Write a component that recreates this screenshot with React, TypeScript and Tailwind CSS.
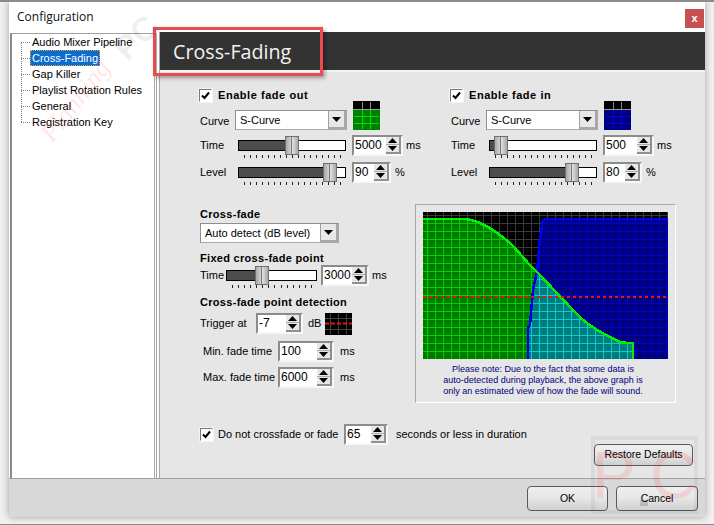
import React from 'react';

const font = "font-['Liberation_Sans',Arial,sans-serif]";

const ArrowDown = ({ w = 9, h = 5 }: { w?: number; h?: number }) => (
  <svg width={w} height={h} viewBox="0 0 9 5"><path d="M0 0h9L4.5 5z" fill="#000" /></svg>
);

const ArrowUp = () => (
  <svg width="9" height="5" viewBox="0 0 9 5"><path d="M0 5h9L4.5 0z" fill="#000" /></svg>
);

function Check({ className = '' }: { className?: string }) {
  return (
    <span className={`flex h-[13px] w-[13px] shrink-0 items-center justify-center border border-[#7a7a7a] border-b-white border-r-white bg-white shadow-[0_0_0_1px_#f4f4f4] ${className}`}>
      <svg width="9" height="9" viewBox="0 0 9 9"><path d="M1 4.5l2.5 2.5L8 1.5" fill="none" stroke="#000" strokeWidth="2" /></svg>
    </span>
  );
}

function Combo({ value, width }: { value: string; width: string }) {
  return (
    <div className={`flex h-[20px] items-stretch border border-[#8f8f8f] border-b-[#a8a8a8] border-r-[#a8a8a8] bg-white pl-[4px] ${width}`}>
      <span className="flex-1 self-center text-[11px] leading-none text-black">{value}</span>
      <span className="flex w-[18px] items-center justify-center border-l border-[#a0a0a0] border-b-2 border-r-2 border-b-[#a8a8a8] border-r-[#a8a8a8] bg-[#e8e8e8]">
        <ArrowDown />
      </span>
    </div>
  );
}

function Slider({ width, pos }: { width: number; pos: number }) {
  const fill = pos + 7;
  const ticks = Math.floor((width - 12) / 5.4);
  return (
    <div className="relative h-[21px] shrink-0" style={{ width }}>
      <div className="absolute left-0 right-0 top-[5px] flex h-[11px] border border-black bg-white">
        <div className="h-full bg-[#4d4d4d]" style={{ width: fill }} />
      </div>
      <div className="absolute top-[1px] flex h-[19px] w-[14px] border border-[#707070] bg-[#c6c6c6]" style={{ left: pos }}>
        <span className="w-[5px] bg-gradient-to-r from-[#a8a8a8] to-[#d4d4d4]" />
        <span className="w-px bg-[#777]" />
        <span className="flex-1 bg-gradient-to-r from-[#e4e4e4] to-[#a8a8a8]" />
      </div>
      <div className="absolute left-[6px] right-[5px] top-[20px] flex justify-between">
        {Array.from({ length: ticks }).map((_, i) => (
          <span key={i} className="h-[3px] w-px bg-[#222]" />
        ))}
      </div>
    </div>
  );
}

function Spinner({ value, width }: { value: string; width: string }) {
  return (
    <div className={`flex h-[21px] shrink-0 border-2 border-[#8c8c8c] border-b-[#f7f7f7] border-r-[#f7f7f7] bg-white ${width}`}>
      <span className="flex-1 pl-[1px] pt-[1px] text-[12px] leading-[14px] text-black">{value}</span>
      <span className="flex w-[15px] flex-col items-center justify-center gap-[1px] border-b-2 border-r-2 border-[#909090] bg-[#e6e6e6]">
        <ArrowUp />
        <span className="h-px w-full bg-[#aaa]" />
        <ArrowDown />
      </span>
    </div>
  );
}

function Swatch({ kind }: { kind: 'green' | 'blue' }) {
  const fill = kind === 'green' ? '#008000' : '#000080';
  const line = kind === 'green' ? '#00e000' : '#0000e0';
  return (
    <svg width="27" height="29" viewBox="0 0 27 29" className="block shrink-0">
      <rect width="27" height="29" fill="#000" />
      <rect y="9" width="27" height="20" fill={fill} />
      <path d="M9.5 1V9M17.5 1V9" stroke="#888" />
      <path d="M0 8.5H27" stroke="#999" />
      <path d="M9.5 9V28M17.5 9V28M1 15.5H26M1 22.5H26" stroke={line} />
    </svg>
  );
}

function FadeGroup(props: { title: string; kind: 'green' | 'blue'; time: string; timePos: number; level: string; levelPos: number; width: string }) {
  return (
    <div className={`shrink-0 ${props.width}`}>
      <div className="flex h-[12px] items-center">
        <Check className="-ml-[1px]" />
        <span className="ml-[6px] text-[11px] font-bold tracking-[0.55px]">{props.title}</span>
      </div>
      <div className="flex h-[29px] items-end">
        <span className="mb-[3px] w-[35px] text-[11px] leading-none">Curve</span>
        <Combo value="S-Curve" width="w-[112px]" />
        <span className="ml-[6px]"><Swatch kind={props.kind} /></span>
      </div>
      <div className="mt-[5px] flex h-[21px] items-center">
        <span className="w-[38px] text-[11px]">Time</span>
        <Slider width={108} pos={props.timePos} />
        <span className="ml-[6px] flex items-center">
          <Spinner value={props.time} width="w-[51px]" />
          <span className="ml-[3px] text-[11px]">ms</span>
        </span>
      </div>
      <div className="mt-[6px] flex h-[21px] items-center">
        <span className="w-[38px] text-[11px]">Level</span>
        <Slider width={108} pos={props.levelPos} />
        <span className="ml-[6px] flex items-center">
          <Spinner value={props.level} width="w-[39px]" />
          <span className="ml-[4px] text-[11px]">%</span>
        </span>
      </div>
    </div>
  );
}

const GREEN_AREA = 'M0 7H42C55 8 68 15 87 31C98 42 104 51 114 60C122 68 137 85 157 105C167 115 180 122 197 130C202 131 206 131 210 131V147H0Z';
const BLUE_AREA = 'M105 147V116L107 113L110 78L114 60L117 25L120 8L124 7H245V147Z';

function GridPattern({ id, fill, line }: { id: string; fill: string; line: string }) {
  return (
    <pattern id={id} width="8" height="8" patternUnits="userSpaceOnUse" x="-3" y="-4">
      <rect width="8" height="8" fill={fill} />
      <path d="M7.5 0V8M0 7.5H8" stroke={line} />
    </pattern>
  );
}

function Graph() {
  return (
    <svg width="245" height="147" viewBox="0 0 245 147" className="block" shapeRendering="crispEdges">
      <defs>
        <GridPattern id="g-black" fill="#000000" line="#3a3a3a" />
        <GridPattern id="g-green" fill="#007b00" line="#00d000" />
        <GridPattern id="g-blue" fill="#00007b" line="#0000d0" />
        <GridPattern id="g-teal" fill="#007b7b" line="#00d0d0" />
        <clipPath id="clip-green"><path d={GREEN_AREA} /></clipPath>
      </defs>
      <rect width="245" height="147" fill="url(#g-black)" />
      <path d={GREEN_AREA} fill="url(#g-green)" />
      <path d={BLUE_AREA} fill="url(#g-blue)" />
      <path d={BLUE_AREA} fill="url(#g-teal)" clipPath="url(#clip-green)" />
      <path d="M105 147V116L107 113L110 78L114 60L117 25L120 8L124 7H245" fill="none" stroke="#0000f0" strokeWidth="2.5" />
      <path d="M0 7H42C55 8 68 15 87 31C98 42 104 51 114 60C122 68 137 85 157 105C167 115 180 122 197 130C202 131 206 131 210 131V147" fill="none" stroke="#00f000" strokeWidth="2.5" />
      <path d="M0 84.5H245" stroke="#f01010" strokeWidth="2" strokeDasharray="3 3" />
    </svg>
  );
}

function DbSwatch() {
  return (
    <svg width="27" height="22" viewBox="0 0 27 22" className="block shrink-0">
      <rect width="27" height="22" fill="#000" />
      <path d="M5.5 1V21M13.5 1V21M21.5 1V21M0 5.5H27M0 16.5H27" stroke="#444" />
      <path d="M0 10.5H27" stroke="#f01010" strokeWidth="2" strokeDasharray="4 2" />
    </svg>
  );
}

const TREE = ['Audio Mixer Pipeline', 'Cross-Fading', 'Gap Killer', 'Playlist Rotation Rules', 'General', 'Registration Key'];

function Tree() {
  return (
    <div className="ml-px h-[445px] w-[143px] shrink-0 border-l-2 border-t border-[#8a8a8a] border-t-[#a0a0a0] bg-white">
      <div className="relative">
        <div className="absolute left-[9px] top-[8px] h-[80px] border-l border-dotted border-[#808080]" />
        {TREE.map((name) => {
          const selected = name === 'Cross-Fading';
          return (
            <div key={name} className="flex h-[16px] items-center pl-[9px]">
              <span className="w-[9px] shrink-0 border-t border-dotted border-[#808080]" />
              <span
                className={
                  selected
                    ? 'border border-dotted border-[#f0a040] bg-[#0a6ccf] pl-[1px] pr-[1px] text-[11px] leading-[14px] text-white'
                    : 'pl-[2px] text-[11px] leading-[14px] text-black'
                }
              >
                {name}
              </span>
            </div>
          );
        })}
      </div>
    </div>
  );
}

function PushButton({ label, width }: { label: string; width: string }) {
  return (
    <button className={`flex items-center justify-center rounded-[4px] border border-[#5a5a5a] bg-gradient-to-b from-[#efefef] via-[#e6e6e6] to-[#cfcfcf] text-[10.5px] text-black ${width}`}>
      {label}
    </button>
  );
}

export default function App() {
  return (
    <div className={`relative h-[525px] w-[714px] overflow-hidden border-b border-t-2 border-[#8c8c8c] bg-[#f0f0f0] pl-[9px] text-black ${font}`}>
      <div className="flex h-[515px] w-[696px] flex-col bg-white shadow-[0_0_7px_rgba(0,0,0,0.35)]">
        {/* Title bar */}
        <div className="flex h-[30px] items-start justify-between">
          <span className="ml-[8px] mt-[7px] font-['Open_Sans',sans-serif] text-[12px] leading-[16px] text-[#111]">Configuration</span>
          <span className="mr-[1px] mt-[7px] flex h-[19px] w-[19px] items-center justify-center bg-[#c75050] text-[11px] font-bold leading-none text-white">x</span>
        </div>

        {/* Body */}
        <div className="flex flex-1">
          <div className="mt-[1px] flex items-start">
            <Tree />
          </div>
          <div className="ml-[1px] mt-[1px] h-[445px] w-[3px] shrink-0 border-x border-[#a8a8a8]" />
          <div className="w-[2px] shrink-0" />
          <div className="flex h-[446px] min-w-0 flex-1 flex-col border-l border-[#a8a8a8] bg-[#e6e6e6]">
            <div className="flex h-[40px] shrink-0 items-center border-b-2 border-[#f4f4f4] bg-[#333333] pl-[13px] pt-[2px]">
              <span className="font-['Open_Sans',sans-serif] text-[19.7px] leading-none text-[#f2f2f2]">Cross-Fading</span>
            </div>
            <div className="pl-[40px] pr-[12px] pt-[17px]">
              <div className="flex">
                <FadeGroup title="Enable fade out" kind="green" time="5000" timePos={47} level="90" levelPos={85} width="w-[251px]" />
                <FadeGroup title="Enable fade in" kind="blue" time="500" timePos={5} level="80" levelPos={76} width="w-[242px]" />
              </div>

              <div className="mt-[21px] flex">
                <div className="w-[215px] shrink-0 pt-[4px]">
                  <div className="text-[11px] font-bold leading-[13px] tracking-[0.3px]">Cross-fade</div>
                  <div className="mt-[2px]"><Combo value="Auto detect (dB level)" width="w-[139px]" /></div>
                  <div className="mt-[8px] text-[11px] font-bold leading-[14px] tracking-[0.3px]">Fixed cross-fade point</div>
                  <div className="flex h-[21px] items-center">
                    <span className="w-[26px] text-[11px]">Time</span>
                    <Slider width={91} pos={29} />
                    <span className="ml-[4px]"><Spinner value="3000" width="w-[48px]" /></span>
                    <span className="ml-[3px] text-[11px]">ms</span>
                  </div>
                  <div className="mt-[9px] text-[11px] font-bold leading-[14px] tracking-[0.3px]">Cross-fade point detection</div>
                  <div className="mt-[4px] flex h-[21px] items-center">
                    <span className="w-[56px] text-[11px]">Trigger at</span>
                    <Spinner value="-7" width="w-[47px]" />
                    <span className="ml-[5px] w-[17px] text-[11px]">dB</span>
                    <DbSwatch />
                  </div>
                  <div className="ml-[3px] mt-[7px] flex h-[21px] items-center">
                    <span className="w-[75px] text-[11px]">Min. fade time</span>
                    <Spinner value="100" width="w-[56px]" />
                    <span className="ml-[6px] text-[11px]">ms</span>
                  </div>
                  <div className="ml-[3px] mt-[5px] flex h-[21px] items-center">
                    <span className="w-[75px] text-[11px]">Max. fade time</span>
                    <Spinner value="6000" width="w-[56px]" />
                    <span className="ml-[6px] text-[11px]">ms</span>
                  </div>
                </div>
                <div className="h-[199px] w-[261px] shrink-0 border border-[#a8a8a8] border-b-white border-r-white pl-[7px] pt-[7px]">
                  <Graph />
                  <p className="mt-[5px] w-[240px] text-center text-[9px] leading-[11px] text-[#000080]">
                    Please note: Due to the fact that some data is
                    <br />
                    auto-detected during playback, the above graph is
                    <br />
                    only an estimated view of how the fade will sound.
                  </p>
                </div>
              </div>

              <div className="mt-[21px] flex h-[21px] items-center">
                <Check />
                <span className="ml-[5px] w-[126px] text-[11px]">Do not crossfade or fade</span>
                <Spinner value="65" width="w-[44px]" />
                <span className="ml-[8px] text-[11px]">seconds or less in duration</span>
              </div>
              <div className="mt-[-1px] flex justify-end">
                <PushButton label="Restore Defaults" width="h-[22px] w-[99px]" />
              </div>
            </div>
          </div>
        </div>

        {/* Footer */}
        <div className="flex h-[39px] shrink-0 items-start justify-end gap-[8px] border-t border-[#a0a0a0] bg-[#d8d8d8] pr-[7px] pt-[7px]">
          <PushButton label="OK" width="h-[25px] w-[81px]" />
          <PushButton label="Cancel" width="h-[25px] w-[82px]" />
        </div>
      </div>

      {/* Screenshot annotations and watermarks */}
      <div className="pointer-events-none absolute left-[153px] top-[25px] h-[49px] w-[170px] border-[3px] border-[#ef4a50] shadow-[2px_2px_4px_rgba(0,0,0,0.35)]" />
      <span className="pointer-events-none absolute left-[112px] top-[18px] -rotate-45 text-[34px] font-bold leading-none text-black/8">PC</span>
      <span className="pointer-events-none absolute left-[28px] top-[86px] -rotate-[52deg] font-['Liberation_Serif',serif] text-[26px] italic leading-none text-[#ff0000]/10">Planning</span>
      <div className="pointer-events-none absolute left-[591px] top-[434px] flex h-[78px] w-[107px] items-center justify-center gap-[14px] border-4 border-black/5 text-[66px] leading-none text-[#ff0000]/10">
        <span>P</span>
        <span>C</span>
      </div>
      <span className="pointer-events-none absolute left-[640px] top-[498px] h-[6px] w-[8px] bg-black/15" />
    </div>
  );
}
